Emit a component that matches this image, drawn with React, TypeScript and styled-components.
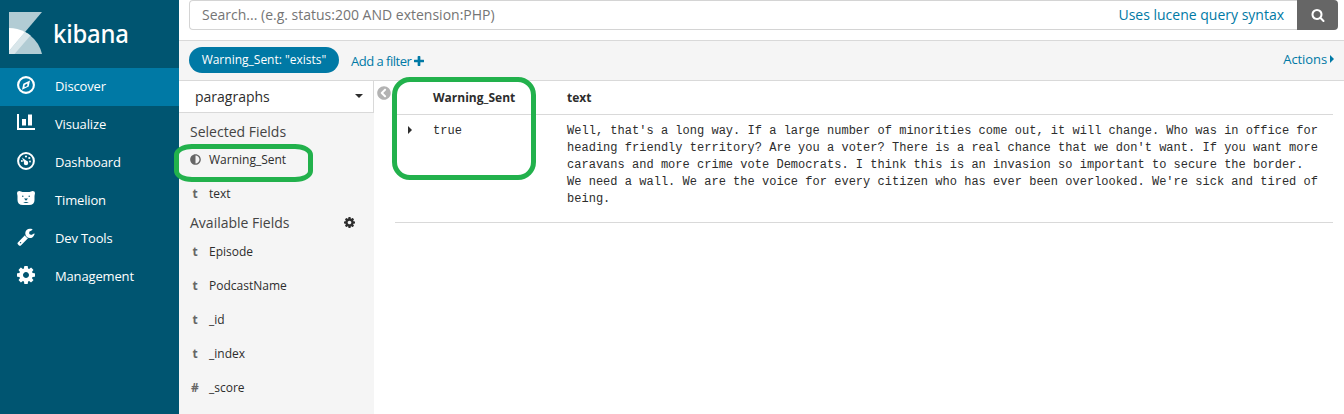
import React from "react";
import styled, { createGlobalStyle } from "styled-components";
import { FaAdjust, FaChevronCircleLeft } from "react-icons/fa";

const Global = createGlobalStyle`
  * { box-sizing: border-box; }
  body { margin: 0; background: #fff; overflow: hidden; font-family: "Open Sans", "Noto Sans", sans-serif; font-size: 13px; color: #2d2d2d; }
`;

const Page = styled.div`
  position: relative;
  display: flex;
  width: 1344px;
  height: 414px;
  overflow: hidden;
`;

const Nav = styled.nav`
  flex: 0 0 179px;
  background: #005571;
  color: #fff;
`;

const Brand = styled.div`
  display: flex;
  height: 68px;
  padding: 12px 0 0 9px;
`;

const BrandName = styled.span`
  margin: 3px 0 0 11px;
  font: 500 25px/36px "Noto Sans", "Open Sans", sans-serif;
  letter-spacing: -0.2px;
  transform: scaleX(0.955);
  transform-origin: left;
`;

const NavItem = styled.a<{ $active?: boolean }>`
  display: flex;
  align-items: flex-start;
  gap: 20px;
  height: 38px;
  padding: 8px 0 0 17px;
  background: ${(p) => (p.$active ? "#0079a5" : "transparent")};
`;

const NavLabel = styled.span`
  line-height: 20px;
  letter-spacing: -0.15px;
`;

const Main = styled.main`
  flex: 1;
  min-width: 0;
  display: flex;
  flex-direction: column;
`;

const SearchBar = styled.div`
  display: flex;
  height: 40px;
  padding: 0 6px 0 10px;
`;

const SearchField = styled.div`
  flex: 1;
  display: flex;
  justify-content: space-between;
  height: 30px;
  padding: 0 13px 0 12px;
  border: 1px solid #d4d4d4;
  border-right: 0;
  border-radius: 4px 0 0 4px;
  font-size: 14px;
  line-height: 28px;
  color: #757575;
`;

const Link = styled.a`
  color: #0079a5;
`;

const SearchButton = styled.button`
  display: flex;
  align-items: center;
  justify-content: center;
  width: 41px;
  height: 30px;
  padding: 0;
  border: 0;
  border-radius: 0 4px 4px 0;
  background: #666;
  color: #fff;
`;

const FilterBar = styled.div`
  display: flex;
  height: 41px;
  padding: 6px 10px 0;
  border-top: 1px solid #d9d9d9;
  border-bottom: 1px solid #d9d9d9;
  background: #f5f5f5;
`;

const Pill = styled.span`
  width: 150px;
  height: 26px;
  border-radius: 13px;
  background: #0079a5;
  color: #fff;
  font-size: 12px;
  line-height: 25px;
  text-align: center;
`;

const AddFilter = styled(Link)`
  display: flex;
  align-items: center;
  gap: 3px;
  height: 28px;
  margin-left: 12px;
  letter-spacing: -0.5px;
`;

const Actions = styled(Link)`
  display: flex;
  align-items: center;
  gap: 3px;
  height: 24px;
  margin-left: auto;
  letter-spacing: -0.1px;
`;

const Content = styled.div`
  flex: 1;
  display: flex;
`;

const Fields = styled.aside`
  flex: 0 0 195px;
  background: #f5f5f5;
`;

const IndexSelect = styled.div`
  display: flex;
  align-items: center;
  justify-content: space-between;
  height: 32px;
  padding: 0 10px 1px 16px;
  border: 1px solid #d9d9d9;
  border-left: 0;
  border-top: 0;
  background: #fff;
  font-size: 14px;
`;

const FieldHeading = styled.div<{ $top: number }>`
  display: flex;
  align-items: center;
  justify-content: space-between;
  height: 20px;
  margin-top: ${(p) => p.$top}px;
  padding: 0 19px 0 11px;
  font-size: 14px;
  color: #444;
  svg { color: #2d2d2d; }
`;

const FieldRow = styled.div`
  display: flex;
  align-items: center;
  height: 34px;
  padding-left: 10px;
  font-size: 12px;
`;

const FieldType = styled.span`
  display: flex;
  justify-content: center;
  width: 12px;
  margin-right: 8px;
  font-weight: 700;
  font-size: 12px;
  color: #666;
`;

const FieldList = styled.div<{ $top: number }>`
  margin-top: ${(p) => p.$top}px;
`;

const Collapse = styled.div`
  flex: 0 0 21px;
  padding: 5px 0 0 3px;
  color: #b3b3b3;
`;

const Table = styled.section`
  flex: 1;
  margin-right: 11px;
`;

const Row = styled.div<{ $head?: boolean }>`
  display: grid;
  grid-template-columns: 38px 134px 1fr;
  height: ${(p) => (p.$head ? "34px" : "108px")};
  padding-top: ${(p) => (p.$head ? "7px" : "8px")};
  border-bottom: 1px solid #d9d9d9;
  font: ${(p) =>
    p.$head
      ? '700 12px/20px "Open Sans", sans-serif'
      : '12px/17px "Liberation Mono", monospace'};
  letter-spacing: ${(p) => (p.$head ? "0" : "0.02px")};
`;

const Expand = styled.span`
  padding: 3px 0 0 13px;
  line-height: 0;
`;

const TextCell = styled.span`
  white-space: pre;
`;

const Highlight = styled.div<{ $x: number; $y: number; $w: number; $h: number; $r: string }>`
  position: absolute;
  left: ${(p) => p.$x}px;
  top: ${(p) => p.$y}px;
  width: ${(p) => p.$w}px;
  height: ${(p) => p.$h}px;
  border: 5px solid #22b14c;
  border-radius: ${(p) => p.$r};
`;

const paths = {
  cog: "M1152 896q0-106-75-181t-181-75-181 75-75 181 75 181 181 75 181-75 75-181zm512-109v222q0 12-8 23t-20 13l-185 28q-19 54-39 91 35 50 107 138 10 12 10 25t-9 23q-27 37-99 108t-94 71q-12 0-26-9l-138-108q-44 23-91 38-16 136-29 186-7 28-36 28h-222q-14 0-24.500-8.500t-11.500-21.500l-28-184q-49-16-90-37l-141 107q-10 9-25 9-14 0-25-11-126-114-165-168-7-10-7-23 0-12 8-23 15-21 51-66.500t54-70.500q-27-50-41-99l-183-27q-13-2-21-12.500t-8-23.500v-222q0-12 8-23t19-13l186-28q14-46 39-92-40-57-107-138-10-12-10-24 0-10 9-23 26-36 98.500-107.500t94.500-71.500q13 0 26 10l138 107q44-23 91-38 16-136 29-186 7-28 36-28h222q14 0 24.500 8.500t11.500 21.500l28 184q49 16 90 37l142-107q9-9 24-9 13 0 25 10 129 119 165 170 7 8 7 22 0 12-8 23-15 21-51 66.500t-54 70.500q26 50 41 98l183 28q13 2 21 12.500t8 23.500z",
  search: "M1216 832q0-185-131.500-316.500t-316.500-131.500-316.500 131.500-131.500 316.500 131.500 316.500 316.500 131.500 316.500-131.500 131.500-316.500zm512 832q0 52-38 90t-90 38q-54 0-90-38l-343-342q-179 124-399 124-143 0-273.500-55.500t-225-150-150-225-55.500-273.500 55.500-273.500 150-225 225-150 273.500-55.500 273.500 55.500 225 150 150 225 55.500 273.500q0 220-124 399l343 343q37 37 37 90z",
  plus: "M1600 736v192q0 40-28 68t-68 28h-416v416q0 40-28 68t-68 28h-192q-40 0-68-28t-28-68v-416h-416q-40 0-68-28t-28-68v-192q0-40 28-68t68-28h416v-416q0-40 28-68t68-28h192q40 0 68 28t28 68v416h416q40 0 68 28t28 68z",
  wrench: "M448 1472q0-26-19-45t-45-19-45 19-19 45 19 45 45 19 45-19 19-45zm644-420l-682 682q-37 37-90 37-52 0-91-37l-106-108q-38-36-38-90 0-53 38-91l681-681q39 98 114.500 173.500t173.500 114.500zm634-435q0 39-23 106-47 134-164.500 217.500t-258.500 83.500q-185 0-316.500-131.500t-131.500-316.500 131.500-316.500 316.500-131.500q58 0 121.500 16.500t107.500 46.500q16 11 16 28t-16 28l-293 169v224l193 107q5-3 79-48.500t135.500-81 70.500-35.500q15 0 23.500 10t8.500 25z",
};

const Glyph = ({ name, size, box = "0 0 1792 1792" }: { name: keyof typeof paths; size: number; box?: string }) => (
  <svg width={size} height={size} viewBox={box} fill="currentColor">
    <path d={paths[name]} />
  </svg>
);

const Caret = ({ down }: { down?: boolean }) =>
  down ? (
    <svg width="8" height="4" viewBox="0 0 8 4"><path d="M0 0h8L4 4z" fill="currentColor" /></svg>
  ) : (
    <svg width="4" height="8" viewBox="0 0 4 8"><path d="M0 0v8l4-4z" fill="currentColor" /></svg>
  );

const Logo = () => (
  <svg width="33" height="42" viewBox="0 0 33 42">
    <path d="M0 0h33L0 39z" fill="#b2ccd4" />
    <path d="M0 16A34 34 0 0 1 33 42H0z" fill="#b2ccd4" />
    <path d="M0 16a34 34 0 0 1 16 4L0 39z" fill="#fff" />
    <path d="M16 20q3 1.400 5.500 3.500L5.500 42H0v-3z" fill="#d9e6ea" />
  </svg>
);

const CompassIcon = () => (
  <svg width="18" height="18" viewBox="0 0 18 18">
    <circle cx="9" cy="9" r="7.900" fill="none" stroke="#fff" strokeWidth="2.100" />
    <path fillRule="evenodd" d="M13 4.500l-1.300 6L5 13.700l1.300-6zM10.300 7.400L7.600 8.900v2.300l2.700-1.300z" fill="#fff" />
  </svg>
);

const BarsIcon = () => (
  <svg width="18" height="16" viewBox="0 0 18 16" fill="#fff">
    <path d="M0 0h2v14h16v2H0zM5 5h4v6.500H5zM11 0.500h4v11h-4z" />
  </svg>
);

const GaugeIcon = () => (
  <svg width="18" height="18" viewBox="0 0 18 18">
    <circle cx="9" cy="9" r="7.9" fill="none" stroke="#fff" strokeWidth="2" />
    <g fill="#fff">
      <circle cx="4.900" cy="9" r="1" /><circle cx="9" cy="4.500" r="1.100" /><circle cx="12.300" cy="6" r="1.100" />
      <circle cx="9" cy="11" r="2.200" /><path d="M4.900 5.600l5.600 4-2.600 2.600z" /><circle cx="13" cy="9.500" r=".9" />
    </g>
  </svg>
);

const BearIcon = () => (
  <svg width="18" height="18" viewBox="0 0 18 18">
    <path d="M0 3Q0 1 2.500 1L5.500 2h7l3-1Q18 1 18 3l-.5 3v4q0 5-5.500 5H6Q.5 15 .5 10V6z" fill="#fff" />
    <g fill="#005571"><circle cx="5.800" cy="6.200" r=".7" /><circle cx="12.200" cy="6.200" r=".7" /><path d="M7 8.500h4l-2 2.300zM6.200 13q2.800-2 5.600 0z" /></g>
  </svg>
);

const navItems = [
  { label: "Discover", icon: <CompassIcon /> },
  { label: "Visualize", icon: <BarsIcon /> },
  { label: "Dashboard", icon: <GaugeIcon /> },
  { label: "Timelion", icon: <BearIcon /> },
  { label: "Dev Tools", icon: <Glyph name="wrench" size={18} box="64 64 1680 1728" /> },
  { label: "Management", icon: <Glyph name="cog" size={18} box="128 128 1536 1536" /> },
];

const available = [["t", "Episode"], ["t", "PodcastName"], ["t", "_id"], ["t", "_index"], ["#", "_score"]];

const transcript = [
  "Well, that's a long way. If a large number of minorities come out, it will change. Who was in office for",
  "heading friendly territory? Are you a voter? There is a real chance that we don't want. If you want more",
  "caravans and more crime vote Democrats. I think this is an invasion so important to secure the border.",
  "We need a wall. We are the voice for every citizen who has ever been overlooked. We're sick and tired of",
  "being.",
].join("\n");

export default function App() {
  return (
    <Page>
      <Global />
      <Nav>
        <Brand><Logo /><BrandName>kibana</BrandName></Brand>
        {navItems.map((n, i) => (
          <NavItem key={n.label} $active={i === 0}>{n.icon}<NavLabel>{n.label}</NavLabel></NavItem>
        ))}
      </Nav>
      <Main>
        <SearchBar>
          <SearchField>
            <span>Search... (e.g. status:200 AND extension:PHP)</span>
            <Link>Uses lucene query syntax</Link>
          </SearchField>
          <SearchButton><Glyph name="search" size={14} /></SearchButton>
        </SearchBar>
        <FilterBar>
          <Pill>Warning_Sent: "exists"</Pill>
          <AddFilter>Add a filter <Glyph name="plus" size={10} box="192 128 1408 1408" /></AddFilter>
          <Actions>Actions <Caret /></Actions>
        </FilterBar>
        <Content>
          <Fields>
            <IndexSelect>paragraphs <Caret down /></IndexSelect>
            <FieldHeading $top={8}>Selected Fields</FieldHeading>
            <FieldList $top={1}>
              <FieldRow><FieldType><FaAdjust size={11} /></FieldType>Warning_Sent</FieldRow>
              <FieldRow><FieldType>t</FieldType>text</FieldRow>
            </FieldList>
            <FieldHeading $top={2}>Available Fields <Glyph name="cog" size={11} box="128 128 1536 1536" /></FieldHeading>
            <FieldList $top={2}>
              {available.map(([t, name]) => (
                <FieldRow key={name}><FieldType>{t}</FieldType>{name}</FieldRow>
              ))}
            </FieldList>
          </Fields>
          <Collapse><FaChevronCircleLeft size={14} /></Collapse>
          <Table>
            <Row $head><span /><span>Warning_Sent</span><span>text</span></Row>
            <Row><Expand><Caret /></Expand><span>true</span><TextCell>{transcript}</TextCell></Row>
          </Table>
        </Content>
      </Main>
      <Highlight $x={392} $y={77} $w={144} $h={103} $r="18px" />
      <Highlight $x={174} $y={144} $w={139} $h={38} $r="18px / 11px" />
    </Page>
  );
}
